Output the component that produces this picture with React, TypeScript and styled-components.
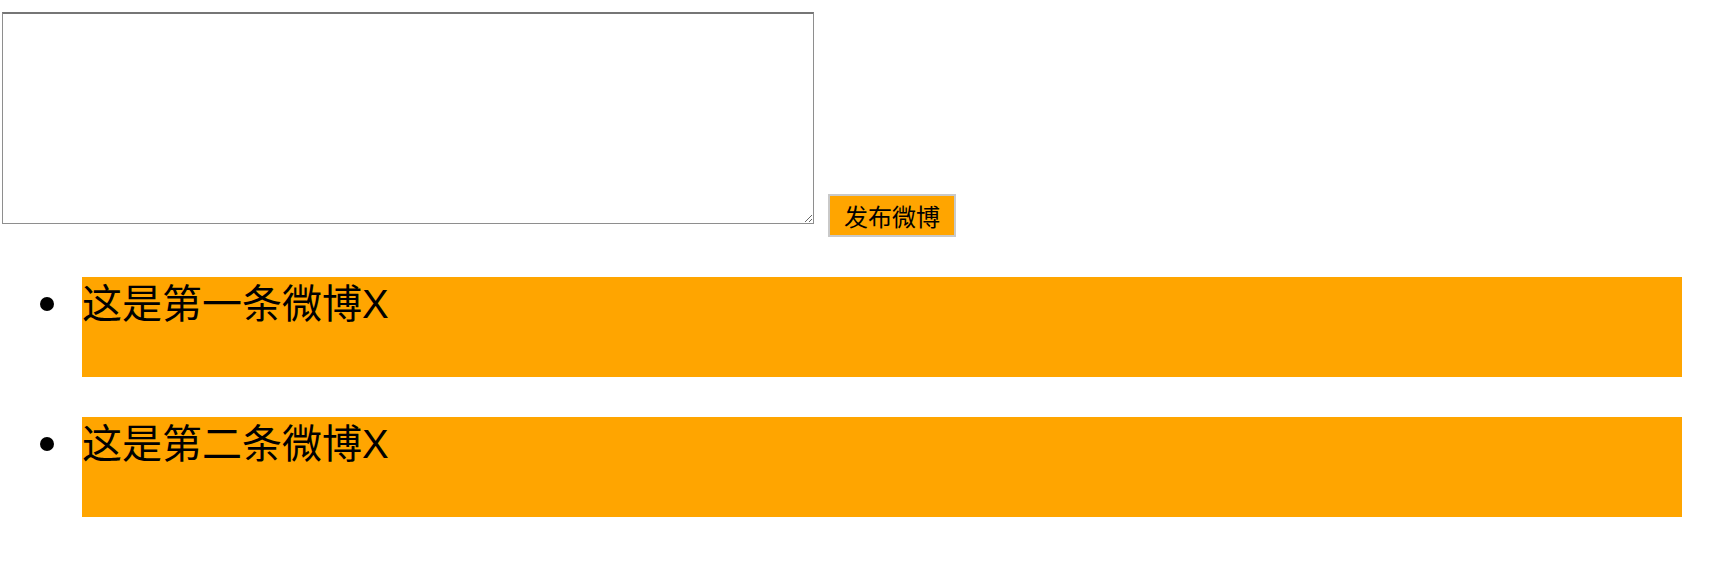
import styled, { createGlobalStyle } from "styled-components";

const GlobalStyle = createGlobalStyle`
  body {
    margin: 0;
    background: #ffffff;
    font-family: "Liberation Sans", "Noto Sans CJK SC", sans-serif;
  }
`

const Compose = styled.div`
  display: flex;
  align-items: flex-start;
  gap: 14px;
  padding: 12px 0 0 2px;
`
const PostInput = styled.textarea`
  box-sizing: border-box;
  width: 812px;
  height: 212px;
  margin: 0;
  padding: 2px;
  border: 1px solid #8e8e8e;
  border-top: 2px solid #767676;
  font-family: "Liberation Mono", monospace;
  font-size: 13px;
  resize: both;
`
const PublishButton = styled.button`
  box-sizing: border-box;
  margin-top: 182px;
  height: 43px;
  width: 128px;
  padding: 0;
  border: 2px solid #c9c9c9;
  background: #ffa500;
  color: #000;
  font-family: "Liberation Sans", "Noto Sans CJK SC", sans-serif;
  font-size: 24px;
  cursor: pointer;
`
const PostList = styled.ul`
  margin: 40px 0 0;
  padding: 0;
  list-style: none;
`
const PostItem = styled.li`
  display: flex;
  align-items: flex-start;
  margin-bottom: 40px;
`
const Bullet = styled.span`
  flex: none;
  width: 14px;
  height: 14px;
  margin: 20px 28px 0 40px;
  border-radius: 50%;
  background: #000;
`
const PostBody = styled.div`
  width: 1600px;
  height: 100px;
  background: #ffa500;
  font-size: 40px;
  line-height: 54px;
  color: #000;
`

const posts = ['这是第一条微博', '这是第二条微博'];

export default function App() {
  return (
    <>
      <GlobalStyle />
      <Compose>
        <PostInput />
        <PublishButton>发布微博</PublishButton>
      </Compose>
      <PostList>
        {posts.map((text) => (
          <PostItem key={text}>
            <Bullet />
            <PostBody>{text}X</PostBody>
          </PostItem>
        ))}
      </PostList>
    </>
  );
}
